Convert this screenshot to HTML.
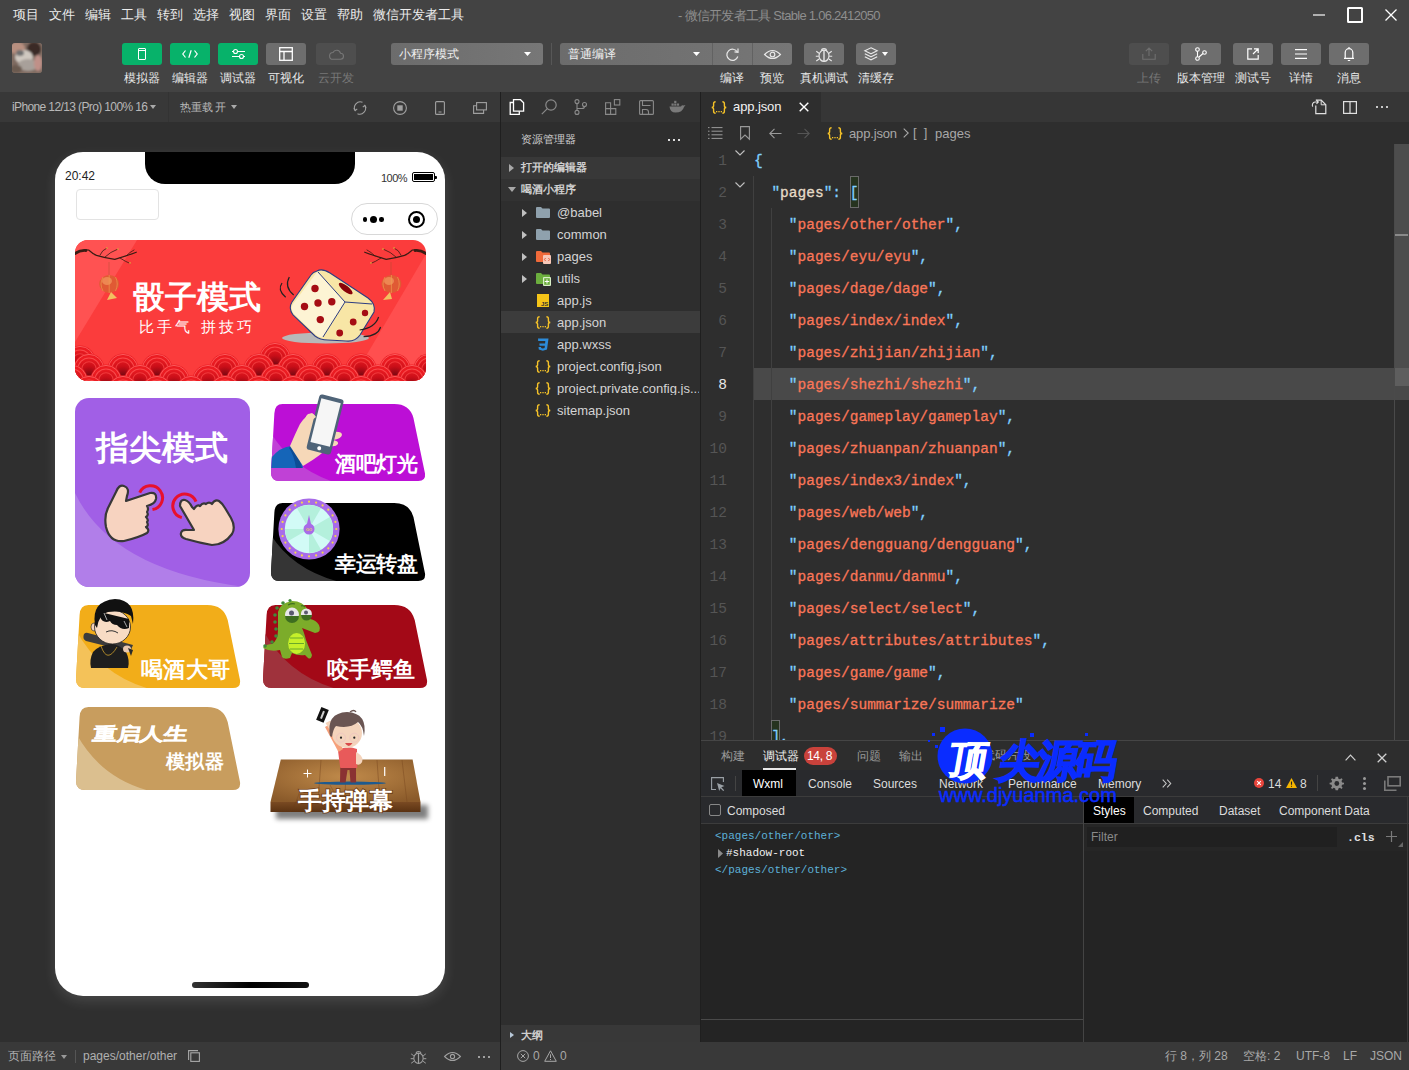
<!DOCTYPE html>
<html><head><meta charset="utf-8">
<style>
*{box-sizing:border-box;margin:0;padding:0}
html,body{width:1409px;height:1070px;overflow:hidden;background:#2e2e2e;font-family:"Liberation Sans",sans-serif;}
.a{position:absolute}
.t{position:absolute;white-space:nowrap;line-height:1}
svg{position:absolute;overflow:visible}
/* title + toolbar */
#top{left:0;top:0;width:1409px;height:92px;background:#434343}
.menu{top:8px;font-size:13px;color:#ececec}
.btn{position:absolute;top:43px;width:40px;height:22px;border-radius:3px}
.g{background:#07b26a}
.gr{background:#6e6e6e}
.lbl{top:72px;font-size:12px;color:#e8e8e8}
/* simulator */
#simhead{left:0;top:92px;width:500px;height:30px;background:#383838}
#simbody{left:0;top:122px;width:500px;height:920px;background:#2f2f2f}
#simfoot{left:0;top:1042px;width:500px;height:28px;background:#393939}
#phone{left:55px;top:152px;width:390px;height:844px;background:#fff;border-radius:28px;box-shadow:0 5px 13px rgba(255,255,255,0.12);overflow:hidden}
/* explorer */
#exp{left:501px;top:92px;width:199px;height:950px;background:#2e2e2e}
#acts{left:501px;top:92px;width:199px;height:30px;background:#333}
.row{position:absolute;left:501px;width:199px;height:22px}
.fn{font-size:13px;color:#d4d4d4}
/* editor */
#tabbar{left:701px;top:92px;width:708px;height:30px;background:#363636}
#tab{left:701px;top:92px;width:120px;height:30px;background:#2e2e2e}
#ed{left:701px;top:122px;width:708px;height:618px;background:#2e2e2e}
.ln{position:absolute;left:701px;width:26px;text-align:right;font-family:"Liberation Mono",monospace;font-size:14.5px;color:#555;line-height:32px;height:32px}
.cl{position:absolute;left:754px;font-family:"Liberation Mono",monospace;font-size:14.5px;line-height:32px;height:32px;white-space:pre;color:#d8d8d8;-webkit-text-stroke:0.3px currentColor}
.p{color:#80d0ff}
.s{color:#fa7658}
.k{color:#e6dcc8}
/* bottom panel */
#panel{left:701px;top:740px;width:708px;height:302px;background:#242424}
#status{left:501px;top:1042px;width:908px;height:28px;background:#393939}
.dt{font-size:13px;color:#dcdcdc}
</style></head><body>
<div class="a" id="top"></div>
<div class="a" id="simhead"></div>
<div class="a" id="simbody"></div>
<div class="a" id="simfoot"></div>
<div class="a" id="exp"></div>
<div class="a" id="acts"></div>
<div class="a" id="tabbar"></div>
<div class="a" id="tab"></div>
<div class="a" id="ed"></div>
<div class="a" id="panel"></div>
<div class="a" id="status"></div>
<!-- dividers -->
<div class="a" style="left:500px;top:92px;width:1px;height:978px;background:#1f1f1f"></div>
<div class="a" style="left:700px;top:92px;width:1px;height:950px;background:#1f1f1f"></div>
<!-- MENU -->
<div class="t menu" style="left:13px">项目</div>
<div class="t menu" style="left:49px">文件</div>
<div class="t menu" style="left:85px">编辑</div>
<div class="t menu" style="left:121px">工具</div>
<div class="t menu" style="left:157px">转到</div>
<div class="t menu" style="left:193px">选择</div>
<div class="t menu" style="left:229px">视图</div>
<div class="t menu" style="left:265px">界面</div>
<div class="t menu" style="left:301px">设置</div>
<div class="t menu" style="left:337px">帮助</div>
<div class="t menu" style="left:373px">微信开发者工具</div>
<div class="t" style="left:678px;top:9px;font-size:13px;color:#8e8e8e;letter-spacing:-0.72px">- 微信开发者工具 Stable 1.06.2412050</div>
<!-- window controls -->
<div class="a" style="left:1313px;top:14px;width:12px;height:2px;background:#b0b0b0"></div>
<div class="a" style="left:1347px;top:7px;width:16px;height:16px;border:2px solid #fff;border-radius:1.5px"></div>
<svg style="left:1385px;top:9px" width="12" height="12"><path d="M0.5 0.5L11.5 11.5M11.5 0.5L0.5 11.5" stroke="#fff" stroke-width="1.3"/></svg>
<!-- avatar -->
<div class="a" style="left:12px;top:43px;width:30px;height:30px;border-radius:3px;overflow:hidden;background:#8a7468">
<svg style="left:0;top:0" width="30" height="30"><defs><filter id="avb"><feGaussianBlur stdDeviation="1.2"/></filter></defs>
<g filter="url(#avb)">
<rect x="0" y="0" width="30" height="30" fill="#7e6a60"/>
<ellipse cx="5" cy="5" rx="8" ry="6" fill="#b89080"/>
<ellipse cx="22" cy="6" rx="7" ry="7" fill="#3a2c28"/>
<ellipse cx="12" cy="14" rx="9" ry="7" fill="#cfc8c0"/>
<ellipse cx="8" cy="10" rx="4" ry="3" fill="#707070"/>
<ellipse cx="16" cy="22" rx="10" ry="6" fill="#a8a09a"/>
<ellipse cx="26" cy="20" rx="4" ry="8" fill="#c09088"/>
<ellipse cx="4" cy="26" rx="6" ry="4" fill="#6a5a50"/>
</g></svg>
</div>
<!-- green buttons -->
<div class="btn g" style="left:122px"></div>
<div class="a" style="left:138px;top:48px;width:8px;height:12px;border:1.3px solid #fff;border-radius:1px"></div>
<div class="a" style="left:139px;top:50px;width:6px;height:1px;background:#fff"></div>
<div class="btn g" style="left:170px"></div>
<svg style="left:182px;top:50px" width="16" height="8"><path d="M3.5 0.5L0.8 4L3.5 7.5M12.5 0.5L15.2 4L12.5 7.5M9.2 0.3L6.8 7.7" stroke="#fff" stroke-width="1.2" fill="none"/></svg>
<div class="btn g" style="left:218px"></div>
<svg style="left:232px;top:49px" width="14" height="10"><path d="M0 2.5H13M0 7.5H13" stroke="#fff" stroke-width="1.1"/><circle cx="3.5" cy="2.5" r="2" fill="#07b26a" stroke="#fff" stroke-width="1.1"/><circle cx="9.5" cy="7.5" r="2" fill="#07b26a" stroke="#fff" stroke-width="1.1"/></svg>
<div class="btn gr" style="left:266px"></div>
<svg style="left:279px;top:47px" width="14" height="14"><rect x="0.7" y="0.7" width="12.6" height="12.6" fill="none" stroke="#fff" stroke-width="1.3"/><path d="M0.7 4.5H13.3M5 4.5V13.3" stroke="#fff" stroke-width="1.3"/></svg>
<div class="btn" style="left:316px;background:#4e4e4e"></div>
<svg style="left:328px;top:49px" width="16" height="11"><path d="M5 10.3H12.5A3 3 0 0 0 12.5 4.3A4 4 0 0 0 5 3.5A3.4 3.4 0 0 0 5 10.3Z" fill="none" stroke="#777" stroke-width="1.1"/></svg>
<div class="t lbl" style="left:124px">模拟器</div>
<div class="t lbl" style="left:172px">编辑器</div>
<div class="t lbl" style="left:220px">调试器</div>
<div class="t lbl" style="left:268px">可视化</div>
<div class="t lbl" style="left:318px;color:#777">云开发</div>
<!-- mode dropdown -->
<div class="a" style="left:391px;top:43px;width:152px;height:22px;border-radius:3px;background:linear-gradient(90deg,#6c6c6c,#777)"></div>
<div class="t" style="left:399px;top:48px;font-size:12px;color:#f0f0f0">小程序模式</div>
<svg style="left:524px;top:52px" width="7" height="4"><path d="M0 0H7L3.5 4Z" fill="#fff"/></svg>
<div class="a" style="left:551px;top:43px;width:1px;height:22px;background:#575757"></div>
<div class="a" style="left:560px;top:43px;width:232px;height:22px;border-radius:3px;background:linear-gradient(90deg,#6c6c6c,#767676)"></div>
<div class="a" style="left:712px;top:43px;width:1px;height:22px;background:#626262"></div>
<div class="a" style="left:752px;top:43px;width:1px;height:22px;background:#626262"></div>
<div class="t" style="left:568px;top:48px;font-size:12px;color:#f0f0f0">普通编译</div>
<svg style="left:693px;top:52px" width="7" height="4"><path d="M0 0H7L3.5 4Z" fill="#fff"/></svg>
<svg style="left:725px;top:47px" width="15" height="15"><path d="M12.3 5A5.6 5.6 0 1 0 12.8 9.5" fill="none" stroke="#e8e8e8" stroke-width="1.2"/><path d="M9.5 4.8L13 5.3L13 1.5" fill="none" stroke="#e8e8e8" stroke-width="1.2"/></svg>
<svg style="left:764px;top:49px" width="17" height="11"><path d="M0.6 5.5Q8.5 -2.5 16.4 5.5Q8.5 13.5 0.6 5.5Z" fill="none" stroke="#e8e8e8" stroke-width="1.2"/><circle cx="8.5" cy="5.5" r="2.3" fill="none" stroke="#e8e8e8" stroke-width="1.2"/></svg>
<div class="btn gr" style="left:804px"></div>
<svg style="left:815px;top:46px" width="18" height="16"><ellipse cx="9" cy="9.8" rx="5" ry="5.6" fill="none" stroke="#e8e8e8" stroke-width="1.2"/><path d="M6.2 4.6A2.9 2.7 0 0 1 11.8 4.6" fill="none" stroke="#e8e8e8" stroke-width="1.2"/><path d="M9 4.3V15.3" stroke="#e8e8e8" stroke-width="1.4"/><path d="M4 7.2L1.3 5.2M3.8 10.3H0.8M4.1 13L1.3 15M14 7.2L16.7 5.2M14.2 10.3H17.2M13.9 13L16.7 15" fill="none" stroke="#e8e8e8" stroke-width="1.1"/></svg>
<div class="btn gr" style="left:856px"></div>
<svg style="left:864px;top:47px" width="14" height="14"><path d="M7 0.8L13.2 3.8L7 6.8L0.8 3.8Z" fill="none" stroke="#e8e8e8" stroke-width="1.1"/><path d="M0.8 6.8L7 9.8L13.2 6.8M0.8 9.8L7 12.8L13.2 9.8" fill="none" stroke="#e8e8e8" stroke-width="1.1"/></svg>
<svg style="left:882px;top:52px" width="6" height="4"><path d="M0 0H6L3 4Z" fill="#fff"/></svg>
<div class="t lbl" style="left:720px">编译</div>
<div class="t lbl" style="left:760px">预览</div>
<div class="t lbl" style="left:800px">真机调试</div>
<div class="t lbl" style="left:858px">清缓存</div>
<!-- right buttons -->
<div class="btn" style="left:1129px;background:#4e4e4e"></div>
<svg style="left:1142px;top:47px" width="14" height="13"><path d="M7 9V1M3.8 4.2L7 1L10.2 4.2M0.8 7V12.3H13.2V7" fill="none" stroke="#6f6f6f" stroke-width="1.1"/></svg>
<div class="btn gr" style="left:1181px"></div>
<svg style="left:1195px;top:47px" width="12" height="14"><circle cx="2.5" cy="2.5" r="1.8" fill="none" stroke="#fff" stroke-width="1.1"/><circle cx="2.5" cy="11.5" r="1.8" fill="none" stroke="#fff" stroke-width="1.1"/><circle cx="9.5" cy="5.5" r="1.8" fill="none" stroke="#fff" stroke-width="1.1"/><path d="M2.5 4.3V9.7M8 6.5L4 10" stroke="#fff" stroke-width="1.1"/></svg>
<div class="btn gr" style="left:1233px"></div>
<svg style="left:1247px;top:48px" width="12" height="12"><path d="M5 0.8H0.8V11.2H11.2V7M6 6L11 1M7 0.8H11.2V5" fill="none" stroke="#fff" stroke-width="1.2"/></svg>
<div class="btn gr" style="left:1281px"></div>
<svg style="left:1295px;top:49px" width="12" height="10"><path d="M0 0.6H12M0 5H12M0 9.4H12" stroke="#fff" stroke-width="1.2"/></svg>
<div class="btn gr" style="left:1329px"></div>
<svg style="left:1343px;top:46px" width="12" height="16"><path d="M1 12.3H11M2.2 12.3V6.5A3.8 3.8 0 0 1 9.8 6.5V12.3M6 1V2.7M4.8 14.5H7.2" fill="none" stroke="#fff" stroke-width="1.2"/></svg>
<div class="t lbl" style="left:1137px;color:#777">上传</div>
<div class="t lbl" style="left:1177px">版本管理</div>
<div class="t lbl" style="left:1235px">测试号</div>
<div class="t lbl" style="left:1289px">详情</div>
<div class="t lbl" style="left:1337px">消息</div>
<!-- SIM HEADER -->
<div class="t" style="left:12px;top:101px;font-size:12px;color:#b8b8b8;letter-spacing:-0.62px">iPhone 12/13 (Pro) 100% 16</div>
<svg style="left:150px;top:105px" width="6" height="4"><path d="M0 0H6L3 4Z" fill="#aaa"/></svg>
<div class="a" style="left:168px;top:92px;width:1px;height:30px;background:#333"></div>
<div class="t" style="left:180px;top:101.5px;font-size:11.2px;color:#b8b8b8;letter-spacing:-0.2px">热重载 开</div>
<svg style="left:230.5px;top:105px" width="6" height="4"><path d="M0 0H6L3 4Z" fill="#aaa"/></svg>
<svg style="left:353px;top:101px" width="14" height="14"><path d="M2.2 9.5A5.8 5.8 0 0 1 9.5 1.3M11.8 4.5A5.8 5.8 0 0 1 4.5 12.7" fill="none" stroke="#a0a0a0" stroke-width="1.1"/><path d="M0.8 7.2L2.2 9.6L4.2 7.8M13.2 6.8L11.8 4.4L9.8 6.2" fill="none" stroke="#a0a0a0" stroke-width="1.1"/></svg>
<svg style="left:393px;top:101px" width="14" height="14"><circle cx="7" cy="7" r="6.4" fill="none" stroke="#a0a0a0" stroke-width="1.1"/><rect x="4.3" y="4.3" width="5.4" height="5.4" fill="#a0a0a0"/></svg>
<svg style="left:435px;top:101px" width="10" height="14"><rect x="0.6" y="0.6" width="8.8" height="12.8" rx="1" fill="none" stroke="#a0a0a0" stroke-width="1.1"/><path d="M3.5 11H6.5" stroke="#a0a0a0" stroke-width="1"/></svg>
<svg style="left:473px;top:102px" width="14" height="12"><rect x="3.6" y="0.6" width="9.8" height="7.3" fill="none" stroke="#a0a0a0" stroke-width="1.1"/><path d="M3.6 3.8H0.6V11.4H10.6V7.9" fill="none" stroke="#a0a0a0" stroke-width="1.1"/></svg>
<!-- SIM FOOTER -->
<div class="t" style="left:8px;top:1050px;font-size:12px;color:#b0b0b0">页面路径</div>
<svg style="left:61px;top:1055px" width="6" height="4"><path d="M0 0H6L3 4Z" fill="#999"/></svg>
<div class="a" style="left:75px;top:1050px;width:1px;height:13px;background:#555"></div>
<div class="t" style="left:83px;top:1050px;font-size:12px;color:#b0b0b0">pages/other/other</div>
<svg style="left:188px;top:1050px" width="12" height="12"><path d="M0.6 10V0.6H10" fill="none" stroke="#a8a8a8" stroke-width="1.1"/><rect x="2.8" y="2.8" width="8.6" height="8.6" fill="none" stroke="#a8a8a8" stroke-width="1.1"/></svg>
<svg style="left:410px;top:1049px" width="17" height="15"><ellipse cx="8.5" cy="9.3" rx="4.7" ry="5.2" fill="none" stroke="#a0a0a0" stroke-width="1.1"/><path d="M5.9 4.3A2.7 2.5 0 0 1 11.1 4.3" fill="none" stroke="#a0a0a0" stroke-width="1.1"/><path d="M8.5 4V14.5" stroke="#a0a0a0" stroke-width="1.2"/><path d="M3.8 6.8L1.2 4.9M3.6 9.7H0.7M3.9 12.3L1.2 14.2M13.2 6.8L15.8 4.9M13.4 9.7H16.3M13.1 12.3L15.8 14.2" fill="none" stroke="#a0a0a0" stroke-width="1"/></svg>
<svg style="left:444px;top:1051px" width="17" height="11"><path d="M0.6 5.5Q8.5 -2.5 16.4 5.5Q8.5 13.5 0.6 5.5Z" fill="none" stroke="#a0a0a0" stroke-width="1.1"/><circle cx="8.5" cy="5.5" r="2.1" fill="none" stroke="#a0a0a0" stroke-width="1.1"/></svg>
<div class="a" style="left:478px;top:1056px;width:2px;height:2px;background:#a0a0a0;box-shadow:5px 0 0 #a0a0a0,10px 0 0 #a0a0a0"></div>
<!-- PHONE -->
<div class="a" id="phone">
 <div class="a" style="left:90px;top:0;width:210px;height:32px;background:#000;border-radius:0 0 20px 20px"></div>
 <div class="t" style="left:10px;top:18px;font-size:12px;color:#222">20:42</div>
 <div class="t" style="left:326px;top:21px;font-size:11px;color:#333;letter-spacing:-0.5px">100%</div>
 <div class="a" style="left:357px;top:20px;width:23px;height:10px;border:1.3px solid #000;border-radius:2px;padding:1.3px"><div style="width:100%;height:100%;background:#000"></div></div>
 <div class="a" style="left:380px;top:23.5px;width:2px;height:3.5px;background:#000;border-radius:0 1px 1px 0"></div>
 <div class="a" style="left:21px;top:37px;width:83px;height:31px;border:1px solid #e3e3e3;border-radius:4px"></div>
 <div class="a" style="left:296px;top:51px;width:87px;height:32px;border:1px solid #d8d8d8;border-radius:16px"></div>
 <div class="a" style="left:307.5px;top:65px;width:4.5px;height:4.5px;border-radius:50%;background:#000"></div>
 <div class="a" style="left:314.5px;top:63.5px;width:7px;height:7px;border-radius:50%;background:#000"></div>
 <div class="a" style="left:324px;top:65px;width:4.5px;height:4.5px;border-radius:50%;background:#000"></div>
 <div class="a" style="left:353px;top:59px;width:17px;height:17px;border-radius:50%;border:2px solid #000"></div>
 <div class="a" style="left:358px;top:64px;width:7px;height:7px;border-radius:50%;background:#000"></div>
 <div class="a" style="left:137px;top:830px;width:117px;height:6px;border-radius:3px;background:linear-gradient(90deg,#333,#000 50%,#111)"></div>
 <svg style="left:0;top:0" width="390" height="844" viewBox="55 152 390 844">
<defs>
 <clipPath id="cb"><rect x="75" y="240" width="351" height="141" rx="13"/></clipPath>
 <clipPath id="cp"><rect x="75" y="398" width="175" height="189" rx="14"/></clipPath>
 <path id="tag" d="M12 0H128Q144 0 148 15L160 75Q161 83 153 83H9Q0 83 0 74L3.5 10Q4 0 12 0Z"/>
 <clipPath id="ct1"><use href="#tag" transform="translate(271,404) scale(0.9625,0.928)"/></clipPath>
 <clipPath id="ct2"><use href="#tag" transform="translate(271,503) scale(0.9625,0.94)"/></clipPath>
 <clipPath id="ct3"><use href="#tag" transform="translate(76,605) scale(1.025,1.0)"/></clipPath>
 <clipPath id="ct4"><use href="#tag" transform="translate(263,605) scale(1.025,1.0)"/></clipPath>
 <clipPath id="ct5"><use href="#tag" transform="translate(76,707) scale(1.025,1.0)"/></clipPath>
 <radialGradient id="scg" cx="0.5" cy="0.75" r="0.6"><stop offset="0" stop-color="#6e0610"/><stop offset="0.55" stop-color="#c80e18"/><stop offset="1" stop-color="#ec1c22"/></radialGradient><g id="sc"><circle r="15.5" fill="url(#scg)"/><circle r="14.6" fill="none" stroke="#ff7070" stroke-width="0.9" opacity=".8"/><circle r="11" fill="none" stroke="#ff5a5a" stroke-width="1.1" opacity=".75"/><circle r="7.2" fill="none" stroke="#ff5050" stroke-width="1.1" opacity=".6"/></g>
 <radialGradient id="wood" cx="0.5" cy="0.4" r="0.7"><stop offset="0" stop-color="#c08a4a"/><stop offset="1" stop-color="#8a5a2a"/></radialGradient>
</defs>
<!-- BANNER -->
<g clip-path="url(#cb)">
 <rect x="75" y="240" width="351" height="141" fill="#fb3c3c"/>
 <path d="M75 240H137L75 342Z" fill="#ff5252"/>
 <path d="M426 254L366 356V381H426Z" fill="#ff4f4f"/>
 <g>
  <use href="#sc" x="80" y="361"/><use href="#sc" x="275" y="358"/><use href="#sc" x="89" y="369"/><use href="#sc" x="123" y="369"/><use href="#sc" x="157" y="369"/><use href="#sc" x="225" y="369"/><use href="#sc" x="259" y="369"/><use href="#sc" x="293" y="369"/><use href="#sc" x="327" y="369"/><use href="#sc" x="361" y="369"/><use href="#sc" x="395" y="369"/><use href="#sc" x="429" y="369"/><use href="#sc" x="72" y="380"/><use href="#sc" x="106" y="380"/><use href="#sc" x="140" y="380"/><use href="#sc" x="174" y="380"/><use href="#sc" x="208" y="380"/><use href="#sc" x="242" y="380"/><use href="#sc" x="276" y="380"/><use href="#sc" x="310" y="380"/><use href="#sc" x="344" y="380"/><use href="#sc" x="378" y="380"/><use href="#sc" x="412" y="380"/><use href="#sc" x="89" y="391"/><use href="#sc" x="123" y="391"/><use href="#sc" x="157" y="391"/><use href="#sc" x="191" y="391"/><use href="#sc" x="225" y="391"/><use href="#sc" x="259" y="391"/><use href="#sc" x="293" y="391"/><use href="#sc" x="327" y="391"/><use href="#sc" x="361" y="391"/><use href="#sc" x="395" y="391"/><use href="#sc" x="429" y="391"/></g>
 <!-- branches -->
 <g fill="none" stroke="#3a1c14" stroke-linecap="round">
  <path d="M75 253.5Q82 249 88.6 250Q93 254 96.5 255.4Q105 258 114.8 259.4Q126 256 136.3 252.2" stroke-width="1.2"/>
  <path d="M75 253.5Q80 250 86 250.5" stroke-width="2.8"/>
  <path d="M105 257Q110 252 118 249M120 258Q126 262 130 263.4M100 255Q102 250 107 248M126 256Q130 252 134 250" stroke-width="0.8"/>
  <path d="M426 253.5Q419 249 412.4 250Q408 254 404.5 255.4Q396 258 386.2 259.4Q375 256 364.7 252.2" stroke-width="1.2"/>
  <path d="M426 253.5Q421 250 415 250.5" stroke-width="2.8"/>
  <path d="M396 257Q391 252 383 249M381 258Q375 262 371 263.4M401 255Q399 250 394 248M375 256Q371 252 367 250" stroke-width="0.8"/>
 </g>
 <g fill="#f0a040" opacity=".9"><circle cx="118" cy="249" r="0.9"/><circle cx="130" cy="263" r="0.9"/><circle cx="107" cy="248" r="0.9"/><circle cx="383" cy="249" r="0.9"/><circle cx="371" cy="263" r="0.9"/><circle cx="394" cy="248" r="0.9"/></g>
 <path d="M109 262V275M391 262V275" stroke="#a05030" stroke-width="0.4"/>
 <ellipse cx="109.2" cy="284" rx="10" ry="9" fill="#e05a34"/><ellipse cx="107" cy="281" rx="5" ry="4" fill="#f29a60" opacity=".7"/><path d="M103 277Q99 284 103 291M109.2 275V293M115.5 277Q119 284 115.5 291" fill="none" stroke="#f0a050" stroke-width="0.8" opacity=".8"/><path d="M111 292L107 300L117 298Z" fill="#f2c060"/>
 <ellipse cx="391.4" cy="284" rx="10" ry="9" fill="#e05a34"/><ellipse cx="389" cy="281" rx="5" ry="4" fill="#f29a60" opacity=".7"/><path d="M385 277Q381 284 385 291M391.4 275V293M397.5 277Q401 284 397.5 291" fill="none" stroke="#f0a050" stroke-width="0.8" opacity=".8"/><path d="M390 292L383 300L392 299Z" fill="#f2c060"/>
 <!-- dice shadow -->
 <ellipse cx="325.5" cy="338" rx="43.5" ry="5.5" fill="#b8b8b8"/>
 <path d="M317 271Q322 268 330 273L368 298Q376 304 374 312L360 335Q355 342 346 341L328 340Q320 340 315 336L293 315Q288 308 292 302L311 275Q313 272 317 271Z" fill="#f8e6a6" stroke="#2c3c82" stroke-width="1.1"/>
 <path d="M317 272L293 304Q290 309 294 314L316 335Q320 338 323 337L345 302L319 273Z" fill="#fdf4d4"/>
 <path d="M318 272L345 302L372 304" fill="none" stroke="#2c3c82" stroke-width="1"/>
 <path d="M345 302L323 337" fill="none" stroke="#2c3c82" stroke-width="1"/>
 <g fill="#a50d14">
  <circle cx="315" cy="288.5" r="3.7"/><circle cx="304.5" cy="306.5" r="3.7"/><circle cx="318" cy="303" r="3.7"/><circle cx="331.8" cy="301.7" r="3.7"/><circle cx="320.3" cy="319.6" r="3.7"/>
  <circle cx="365" cy="313" r="3.2"/><circle cx="353.2" cy="322" r="3.4"/><circle cx="339.7" cy="333" r="3.4"/>
  <ellipse cx="345.7" cy="288.6" rx="8.5" ry="3" transform="rotate(38 345.7 288.6)" fill="#8a0408"/>
 </g>
 <path d="M289.3 277Q284 287 293.7 295M282 283Q277 290 285.7 297.3" fill="none" stroke="#222" stroke-width="1.2"/>
 <path d="M378.6 317Q375 328 359.6 330M380.6 327Q378 336 363.6 336.6" fill="none" stroke="#222" stroke-width="1.2"/>
</g>
<text x="133" y="308" font-family="Liberation Sans" font-size="32" font-weight="bold" fill="#fff" letter-spacing="0">骰子模式</text>
<text x="139" y="332" font-family="Liberation Sans" font-size="15" fill="#fff" letter-spacing="3.2">比手气 拼技巧</text>
<!-- PURPLE -->
<g clip-path="url(#cp)">
 <rect x="75" y="398" width="175" height="189" fill="#a15fe6"/>
 <path d="M75 493Q112 570 245 587H75Z" fill="#b17ee9"/>
</g>
<text x="96" y="459" font-family="Liberation Sans" font-size="32.5" font-weight="bold" fill="#fff" letter-spacing="0">指尖模式</text>
<!-- hands -->
<path d="M139.7 492.6A12 12 0 1 1 152.5 509.6" fill="none" stroke="#e8102c" stroke-width="3"/>
<path d="M196 501.6A12 12 0 1 0 181.8 517.6" fill="none" stroke="#e8102c" stroke-width="3"/>
<path d="M116 492Q119 484 124 486Q130 488 127 496L126 501L150 493Q157 492 156 499Q155 504 147 506Q149 509 147 512Q149 515 146 517Q149 520 147 522Q149 526 146 527Q150 530 147 533Q140 537 124 541Q110 543 106 527Q104 516 108 508Z" fill="#f7d3c0" stroke="#383838" stroke-width="2.2" stroke-linejoin="round"/>
<path d="M180 506Q180 499 185 500Q189 501 192 507L194 509Q197 504 200 506Q203 502 206 504Q209 501 212 504Q215 499 219 501Q222 503 225 508L231 518Q236 527 232 534Q224 545 212 545Q200 543 186 539Q180 537 181 533Q182 529 188 530L194 530Z" fill="#f7d3c0" stroke="#383838" stroke-width="2.2" stroke-linejoin="round"/>
<!-- MAGENTA TAG -->
<g clip-path="url(#ct1)">
 <rect x="270" y="400" width="160" height="85" fill="#bc0fd6"/>
 <path d="M271 433Q293 470 340 484H270Z" fill="#c041d6"/>
 <path d="M271 458Q280 447 291 446Q300 449 303 468H271Z" fill="#1565b8"/>
 <path d="M291 446Q298 450 302 468L296 468Q294 455 289 448Z" fill="#0d4d96"/>
 <path d="M290 446Q296 432 300 424Q305 416 312 413L318 418L333 443Q322 455 303 466Z" fill="#f6d8b8"/>
 <path d="M333 432Q342 431 342 435Q341 439 333 440M333 440Q339 441 338 444Q336 447 330 446" fill="#f6d8b8"/>
</g>
<g transform="translate(325,425) rotate(14)">
 <rect x="-12.5" y="-29" width="25" height="57" rx="3" fill="#4f6478"/>
 <rect x="-10" y="-25" width="20" height="45" fill="#f6f6f6"/>
 <circle cx="0" cy="24" r="2" fill="#fff"/>
</g>
<path d="M308 423Q303 418 308 414Q313 412 316 417" fill="#f6d8b8"/>
<text x="335" y="470.5" font-family="Liberation Sans" font-size="21" font-weight="bold" fill="#fff" letter-spacing="-0.3">酒吧灯光</text>
<!-- BLACK TAG -->
<g clip-path="url(#ct2)">
 <rect x="270" y="500" width="160" height="85" fill="#000"/>
 <path d="M271 535Q293 570 340 582H270Z" fill="#353535"/>
</g>
<circle cx="309" cy="529" r="30.6" fill="#a86ce8"/>
<circle cx="309" cy="529" r="24.2" fill="#d2fbf6"/>
<g fill="#b4f0dc">
 <path d="M309 529L309 505A24 24 0 0 1 321 508.2Z"/><path d="M309 529L329.8 517A24 24 0 0 1 333 529Z"/><path d="M309 529L321 549.8A24 24 0 0 1 309 553Z"/><path d="M309 529L288.2 541A24 24 0 0 1 285 529Z"/><path d="M309 529L297 508.2A24 24 0 0 1 309 505Z"/><path d="M309 529L333 529A24 24 0 0 1 329.8 541Z"/>
</g>
<g fill="#f5d84a"><circle cx="336.3" cy="529.0" r="1.1"/><circle cx="335.4" cy="536.1" r="1.1"/><circle cx="332.6" cy="542.6" r="1.1"/><circle cx="328.3" cy="548.3" r="1.1"/><circle cx="322.6" cy="552.6" r="1.1"/><circle cx="316.1" cy="555.4" r="1.1"/><circle cx="309.0" cy="556.3" r="1.1"/><circle cx="301.9" cy="555.4" r="1.1"/><circle cx="295.4" cy="552.6" r="1.1"/><circle cx="289.7" cy="548.3" r="1.1"/><circle cx="285.4" cy="542.6" r="1.1"/><circle cx="282.6" cy="536.1" r="1.1"/><circle cx="281.7" cy="529.0" r="1.1"/><circle cx="282.6" cy="521.9" r="1.1"/><circle cx="285.4" cy="515.4" r="1.1"/><circle cx="289.7" cy="509.7" r="1.1"/><circle cx="295.3" cy="505.4" r="1.1"/><circle cx="301.9" cy="502.6" r="1.1"/><circle cx="309.0" cy="501.7" r="1.1"/><circle cx="316.1" cy="502.6" r="1.1"/><circle cx="322.6" cy="505.4" r="1.1"/><circle cx="328.3" cy="509.7" r="1.1"/><circle cx="332.6" cy="515.4" r="1.1"/><circle cx="335.4" cy="521.9" r="1.1"/></g>
<path d="M309 515L311.5 526H306.5Z" fill="#a86ce8"/><circle cx="309" cy="529" r="5.5" fill="#a86ce8"/><text x="309" y="531" font-family="Liberation Sans" font-size="4" font-weight="bold" fill="#e8c860" text-anchor="middle">GO</text>
<text x="335" y="571" font-family="Liberation Sans" font-size="21" font-weight="bold" fill="#fff" letter-spacing="-0.3">幸运转盘</text>
<!-- YELLOW TAG -->
<g clip-path="url(#ct3)">
 <rect x="74" y="600" width="172" height="92" fill="#f2ad19"/>
 <path d="M76 630Q100 675 150 689H74Z" fill="#f4c259"/>
</g>
<path d="M84 634Q82 639 86 641L130 652L133 645L88 633Q86 632 84 634Z" fill="#3c3c3c"/>
<path d="M93 652Q89 660 91 668H128Q130 660 126 652Q119 644 111 644Q99 645 93 652Z" fill="#1e1e1e"/>
<path d="M101 646Q107 664 117 647" fill="none" stroke="#b8902a" stroke-width="0.9"/>
<ellipse cx="127" cy="649" rx="4" ry="3.5" fill="#e8c8b0"/>
<path d="M128 648L133 650L131 656Z" fill="#2a2a2a"/>
<ellipse cx="94" cy="627" rx="3" ry="4" fill="#f3d2b8" stroke="#222" stroke-width=".6"/>
<ellipse cx="112.5" cy="627" rx="18" ry="17" fill="#f8dcc4" stroke="#222" stroke-width="0.8"/>
<path d="M95 625Q91 601 115 599Q136 600 133 624L131 616Q122 610 108 612Q99 614 97 628Z" fill="#111"/>
<path d="M100 612L129 619L129 628Q122 631 117 625Q112 625 110 621Q103 624 100 617Z" fill="#111"/>
<path d="M104 613L107 620M124 621L127 627" stroke="#bbb" stroke-width="0.9"/>
<path d="M106 632Q112 629 118 633" fill="none" stroke="#333" stroke-width="1"/>
<text x="141" y="676.5" font-family="Liberation Sans" font-size="22" font-weight="bold" fill="#fff" letter-spacing="0.4">喝酒大哥</text>
<!-- RED TAG -->
<g clip-path="url(#ct4)">
 <rect x="260" y="600" width="172" height="92" fill="#a30917"/>
 <path d="M263 630Q287 675 337 689H260Z" fill="#9f323c"/>
</g>
<path d="M263 648Q270 652 280 650L282 657Q284 660 290 658L292 653Q298 656 305 655L308 658Q311 660 312 655L306 640Q304 632 302 628L315 633Q322 632 319 625Q316 620 310 619L308 610Q303 601 292 601Q280 603 278 612L278 630Q278 640 272 644Q266 644 263 648Z" fill="#7cac2a"/>
<g fill="#3f8a3a"><circle cx="277" cy="608" r="1.8"/><circle cx="275" cy="615" r="1.8"/><circle cx="275" cy="622" r="1.8"/><circle cx="276" cy="629" r="1.8"/><circle cx="276" cy="636" r="1.8"/><circle cx="272" cy="642" r="1.8"/><circle cx="265" cy="646" r="1.8"/><circle cx="283" cy="603" r="1.8"/><circle cx="290" cy="600.5" r="1.6"/></g>
<ellipse cx="296.6" cy="643.4" rx="8.5" ry="10.5" fill="#c5f02a"/>
<path d="M290 638H303M289 643.5H304M290 649H303" stroke="#6aa82a" stroke-width="1"/>
<circle cx="292" cy="614.6" r="7" fill="#e8e8e8"/><circle cx="306.4" cy="614" r="5.5" fill="#e8e8e8"/>
<circle cx="291.5" cy="613" r="2.5" fill="#5a5a70"/><circle cx="306" cy="612.5" r="2" fill="#5a5a70"/>
<path d="M285 616H299A7 7 0 0 1 285 616Z" fill="#3e6e20"/><path d="M301 615H312A5.5 5.5 0 0 1 301 615Z" fill="#3e6e20"/>
<path d="M288 605Q292 603 295 604M301 606Q303 605 305 607" stroke="#3e6e20" stroke-width="1.2" fill="none"/>
<text x="327" y="677" font-family="Liberation Sans" font-size="22" font-weight="bold" fill="#fff" letter-spacing="0">咬手鳄鱼</text>
<!-- TAN TAG -->
<g clip-path="url(#ct5)">
 <rect x="74" y="700" width="172" height="92" fill="#c89d5e"/>
 <path d="M76 733Q100 778 150 791H74Z" fill="#dbbf8f"/>
</g>
<text x="92" y="740" font-family="Liberation Sans" font-size="24" font-weight="bold" fill="#fff" stroke="#fff" stroke-width="0.6" transform="translate(92,740) skewX(-10) scale(1,0.74) translate(-92,-740)" letter-spacing="0">重启人生</text>
<text x="166" y="767.5" font-family="Liberation Sans" font-size="18.5" font-weight="bold" fill="#fff" letter-spacing="0.3">模拟器</text>
<!-- WOOD -->
<defs><filter id="bl" x="-10%" y="-50%" width="120%" height="200%"><feGaussianBlur stdDeviation="2.5"/></filter>
<linearGradient id="frt" x1="0" y1="0" x2="0" y2="1"><stop offset="0" stop-color="#7a4a22"/><stop offset="1" stop-color="#5a3212"/></linearGradient></defs>
<rect x="276" y="805" width="152" height="14" fill="#000" opacity=".5" filter="url(#bl)"/>
<path d="M280.8 759.5H412.6L420.5 802H270.5Z" fill="url(#wood)"/>
<rect x="270.5" y="802" width="150" height="10" fill="url(#frt)"/>
<path d="M321 760L318 802M346 760L345 802M377 760L380 802M402 760L407 802" stroke="#7a4a20" stroke-width="0.9" opacity=".55"/>
<path d="M330 785Q340 800 336 812M300 790Q296 805 290 812" stroke="#6a3a18" stroke-width="0.6" fill="none" opacity=".5"/>
<ellipse cx="350" cy="783.2" rx="35.8" ry="1.6" fill="#1e5a8e"/>
<path d="M307.5 769.5V777.5M303.5 773.5H311.5" stroke="#fff" stroke-width="1"/>
<path d="M384.7 767V776" stroke="#fff" stroke-width="1.2"/>
<!-- person -->
<path d="M340.3 767L340 782.6H345.5L347.5 770L349.5 770L350.5 782.6H356.1L356 767Z" fill="#8a3232"/>
<path d="M337.9 750Q347 745 357 749L357.3 768H340.3Z" fill="#e85a5a"/>
<path d="M338.5 752L325 727L331 723.5L343 749Z" fill="#f6a07a"/>
<path d="M331 732L325.5 723L330.5 720.5L335 729Z" fill="#f4d4bc"/>
<path d="M356 752Q364 756 362 762Q360 766 356 764" fill="#f4d4bc"/>
<circle cx="347" cy="733" r="15" fill="#f4d4bc"/>
<path d="M330 736Q326 713 347 712Q368 713 364 736Q363 726 358 722Q350 729 336 726Q333 729 332 737Z" fill="#6a5552"/>
<path d="M350 712Q354 709 356 712" stroke="#6a5552" stroke-width="1.3" fill="none"/>
<circle cx="341" cy="737.7" r="4.5" fill="none" stroke="#f0c8c0" stroke-width="1"/><circle cx="354.3" cy="737.7" r="4.5" fill="none" stroke="#f0c8c0" stroke-width="1"/>
<circle cx="341" cy="737.7" r="1.1" fill="#222"/><circle cx="354.3" cy="737.7" r="1.1" fill="#222"/>
<path d="M345 743Q348.8 749 352.5 743Z" fill="#d84a4a"/>
<g transform="translate(322.1,715.8) rotate(22)"><rect x="-5.5" y="-9.5" width="11" height="19" rx="1.5" fill="#fff"/><rect x="-4" y="-8" width="8" height="14" fill="#111"/><rect x="-1" y="-5" width="2" height="8" fill="#fff" opacity=".8"/></g>
<text x="298" y="808.5" font-family="Liberation Sans" font-size="24" font-weight="bold" fill="#fff" stroke="#6a3a16" stroke-width="1.6" paint-order="stroke" letter-spacing="-0.5">手持弹幕</text>
</svg>

</div>
<!-- EXPLORER -->
<svg style="left:509px;top:99px" width="16" height="16"><path d="M4.5 3.5H1.2V15.3H10.3V12.2" fill="none" stroke="#fff" stroke-width="1.3"/><path d="M4.5 0.7H11.5L14.6 3.8V12.2H4.5Z" fill="none" stroke="#fff" stroke-width="1.3"/></svg>
<svg style="left:541px;top:99px" width="16" height="16"><circle cx="10" cy="6" r="5.2" fill="none" stroke="#8a8a8a" stroke-width="1.2"/><path d="M6.3 9.7L0.8 15.2" stroke="#8a8a8a" stroke-width="1.2"/></svg>
<svg style="left:574px;top:99px" width="14" height="16"><circle cx="3" cy="2.6" r="2" fill="none" stroke="#8a8a8a" stroke-width="1.1"/><circle cx="3" cy="13.4" r="2" fill="none" stroke="#8a8a8a" stroke-width="1.1"/><circle cx="10.5" cy="5.5" r="2" fill="none" stroke="#8a8a8a" stroke-width="1.1"/><path d="M3 4.6V11.4M10.5 7.5Q10.5 9.5 8 9.5H3" fill="none" stroke="#8a8a8a" stroke-width="1.1"/></svg>
<svg style="left:605px;top:99px" width="16" height="16"><path d="M0.6 3.8H5.6V15.4H0.6ZM0.6 9.6H10.8V15.4H5.6" fill="none" stroke="#8a8a8a" stroke-width="1.1"/><rect x="9.4" y="0.6" width="5.4" height="5.4" fill="none" stroke="#8a8a8a" stroke-width="1.1"/></svg>
<svg style="left:639px;top:100px" width="15" height="15"><rect x="0.6" y="0.6" width="13.8" height="13.8" rx="1" fill="none" stroke="#8a8a8a" stroke-width="1.1"/><path d="M3.5 0.6V5.5H11.5M3.5 14.4V9.5H7Q9.5 9.5 9.5 12V14.4" fill="none" stroke="#8a8a8a" stroke-width="1.1"/></svg>
<svg style="left:669px;top:100px" width="17" height="13"><path d="M0.5 6.5H12Q13 4.5 14.5 5.5L16.5 5L15 7Q13.5 12.5 6.5 12.5Q1 12.5 0.5 6.5Z" fill="#7a7a7a"/><rect x="2.5" y="3.5" width="2.2" height="2.2" fill="#7a7a7a"/><rect x="5.2" y="3.5" width="2.2" height="2.2" fill="#7a7a7a"/><rect x="7.9" y="3.5" width="2.2" height="2.2" fill="#7a7a7a"/><rect x="5.2" y="0.8" width="2.2" height="2.2" fill="#7a7a7a"/></svg>
<div class="t" style="left:521px;top:134px;font-size:11px;color:#cfcfcf">资源管理器</div>
<div class="a" style="left:668px;top:138.5px;width:2px;height:2px;background:#ddd;box-shadow:5px 0 0 #ddd,10px 0 0 #ddd"></div>
<div class="row" style="top:157px;background:#383838"></div>
<div class="row" style="top:179px;background:#323232"></div>
<svg style="left:509px;top:164px" width="5" height="8"><path d="M0 0L5 4L0 8Z" fill="#a8a8a8"/></svg>
<div class="t" style="left:521px;top:162px;font-size:11px;font-weight:bold;color:#cfcfcf">打开的编辑器</div>
<svg style="left:508px;top:187px" width="8" height="5"><path d="M0 0H8L4 5Z" fill="#a8a8a8"/></svg>
<div class="t" style="left:521px;top:184px;font-size:11px;font-weight:bold;color:#cfcfcf">喝酒小程序</div>
<div class="row" style="top:311px;background:#3c3c3c"></div>
<!-- folders -->
<svg style="left:522px;top:209px" width="5" height="8"><path d="M0 0L5 4L0 8Z" fill="#c0c0c0"/></svg>
<svg style="left:522px;top:231px" width="5" height="8"><path d="M0 0L5 4L0 8Z" fill="#c0c0c0"/></svg>
<svg style="left:522px;top:253px" width="5" height="8"><path d="M0 0L5 4L0 8Z" fill="#c0c0c0"/></svg>
<svg style="left:522px;top:275px" width="5" height="8"><path d="M0 0L5 4L0 8Z" fill="#c0c0c0"/></svg>
<svg style="left:536px;top:207px" width="14" height="11"><path d="M0 1Q0 0 1 0H5L6.5 1.5H13Q14 1.5 14 2.5V10Q14 11 13 11H1Q0 11 0 10Z" fill="#8fa1ad"/></svg>
<svg style="left:536px;top:229px" width="14" height="11"><path d="M0 1Q0 0 1 0H5L6.5 1.5H13Q14 1.5 14 2.5V10Q14 11 13 11H1Q0 11 0 10Z" fill="#8fa1ad"/></svg>
<svg style="left:536px;top:251px" width="15" height="13"><path d="M0 1Q0 0 1 0H5L6.5 1.5H13Q14 1.5 14 2.5V10Q14 11 13 11H1Q0 11 0 10Z" fill="#f06a3a"/><rect x="7" y="4" width="8" height="9" rx="1" fill="#f8c8b8"/><path d="M9.6 7L8.4 8.5L9.6 10M12.4 7L13.6 8.5L12.4 10" stroke="#e05030" stroke-width="0.9" fill="none"/></svg>
<svg style="left:536px;top:273px" width="15" height="13"><path d="M0 1Q0 0 1 0H5L6.5 1.5H13Q14 1.5 14 2.5V10Q14 11 13 11H1Q0 11 0 10Z" fill="#6cae3e"/><rect x="7" y="4" width="8" height="9" rx="1" fill="#d8efc8"/><rect x="8.2" y="5.2" width="5.6" height="6.6" fill="#6cae3e"/><path d="M11 6.3V10.7M8.8 8.5H13.2" stroke="#fff" stroke-width="1"/></svg>
<div class="t fn" style="left:557px;top:206px">@babel</div>
<div class="t fn" style="left:557px;top:228px">common</div>
<div class="t fn" style="left:557px;top:250px">pages</div>
<div class="t fn" style="left:557px;top:272px">utils</div>
<!-- files -->
<div class="a" style="left:537px;top:294px;width:12px;height:13px;background:#f5c518"></div>
<div class="t" style="left:541px;top:301px;font-size:6px;font-weight:bold;color:#333">JS</div>
<div class="t fn" style="left:557px;top:294px">app.js</div>
<svg style="left:535px;top:316px" width="16" height="13"><path d="M4.6 0.8Q2.6 0.8 2.6 2.8V4.8Q2.6 6.5 0.7 6.5Q2.6 6.5 2.6 8.2V10.2Q2.6 12.2 4.6 12.2M11.4 0.8Q13.4 0.8 13.4 2.8V4.8Q13.4 6.5 15.3 6.5Q13.4 6.5 13.4 8.2V10.2Q13.4 12.2 11.4 12.2" fill="none" stroke="#f5c228" stroke-width="1.4"/><rect x="5" y="10" width="1.3" height="1.3" fill="#f5c228"/><rect x="7.35" y="10" width="1.3" height="1.3" fill="#f5c228"/><rect x="9.7" y="10" width="1.3" height="1.3" fill="#f5c228"/></svg>
<div class="t fn" style="left:557px;top:316px">app.json</div>
<svg style="left:537px;top:338px" width="12" height="13"><path d="M1 0.5H11.5L10 11.5L5.8 12.8L1.8 11.5L1.5 9H4L4.2 10L5.8 10.5L7.6 10L7.9 7.7H2.6L2.3 5.5H8.1L8.3 3H1.2Z" fill="#2c8bd9"/></svg>
<div class="t fn" style="left:557px;top:338px">app.wxss</div>
<svg style="left:535px;top:360px" width="16" height="13"><path d="M4.6 0.8Q2.6 0.8 2.6 2.8V4.8Q2.6 6.5 0.7 6.5Q2.6 6.5 2.6 8.2V10.2Q2.6 12.2 4.6 12.2M11.4 0.8Q13.4 0.8 13.4 2.8V4.8Q13.4 6.5 15.3 6.5Q13.4 6.5 13.4 8.2V10.2Q13.4 12.2 11.4 12.2" fill="none" stroke="#f5c228" stroke-width="1.4"/><rect x="5" y="10" width="1.3" height="1.3" fill="#f5c228"/><rect x="7.35" y="10" width="1.3" height="1.3" fill="#f5c228"/><rect x="9.7" y="10" width="1.3" height="1.3" fill="#f5c228"/></svg>
<div class="t fn" style="left:557px;top:360px">project.config.json</div>
<svg style="left:535px;top:382px" width="16" height="13"><path d="M4.6 0.8Q2.6 0.8 2.6 2.8V4.8Q2.6 6.5 0.7 6.5Q2.6 6.5 2.6 8.2V10.2Q2.6 12.2 4.6 12.2M11.4 0.8Q13.4 0.8 13.4 2.8V4.8Q13.4 6.5 15.3 6.5Q13.4 6.5 13.4 8.2V10.2Q13.4 12.2 11.4 12.2" fill="none" stroke="#f5c228" stroke-width="1.4"/><rect x="5" y="10" width="1.3" height="1.3" fill="#f5c228"/><rect x="7.35" y="10" width="1.3" height="1.3" fill="#f5c228"/><rect x="9.7" y="10" width="1.3" height="1.3" fill="#f5c228"/></svg>
<div class="t fn" style="left:557px;top:382px;width:142px;overflow:hidden">project.private.config.js...</div>
<svg style="left:535px;top:404px" width="16" height="13"><path d="M4.6 0.8Q2.6 0.8 2.6 2.8V4.8Q2.6 6.5 0.7 6.5Q2.6 6.5 2.6 8.2V10.2Q2.6 12.2 4.6 12.2M11.4 0.8Q13.4 0.8 13.4 2.8V4.8Q13.4 6.5 15.3 6.5Q13.4 6.5 13.4 8.2V10.2Q13.4 12.2 11.4 12.2" fill="none" stroke="#f5c228" stroke-width="1.4"/><rect x="5" y="10" width="1.3" height="1.3" fill="#f5c228"/><rect x="7.35" y="10" width="1.3" height="1.3" fill="#f5c228"/><rect x="9.7" y="10" width="1.3" height="1.3" fill="#f5c228"/></svg>
<div class="t fn" style="left:557px;top:404px">sitemap.json</div>
<!-- outline -->
<div class="a" style="left:501px;top:1025px;width:199px;height:17px;background:#383838"></div>
<svg style="left:510px;top:1032px" width="4" height="6"><path d="M0 0L4 3L0 6Z" fill="#b8c8d8"/></svg>
<div class="t" style="left:521px;top:1030px;font-size:11px;font-weight:bold;color:#cfcfcf">大纲</div>
<!-- EDITOR TAB -->
<svg style="left:711px;top:101px" width="16" height="13"><path d="M4.6 0.8Q2.6 0.8 2.6 2.8V4.8Q2.6 6.5 0.7 6.5Q2.6 6.5 2.6 8.2V10.2Q2.6 12.2 4.6 12.2M11.4 0.8Q13.4 0.8 13.4 2.8V4.8Q13.4 6.5 15.3 6.5Q13.4 6.5 13.4 8.2V10.2Q13.4 12.2 11.4 12.2" fill="none" stroke="#f5c228" stroke-width="1.4"/><rect x="5" y="10" width="1.3" height="1.3" fill="#f5c228"/><rect x="7.35" y="10" width="1.3" height="1.3" fill="#f5c228"/><rect x="9.7" y="10" width="1.3" height="1.3" fill="#f5c228"/></svg>
<div class="t" style="left:733px;top:100px;font-size:13px;color:#f2f2f2;letter-spacing:-0.1px">app.json</div>
<svg style="left:799px;top:102px" width="10" height="10"><path d="M0.7 0.7L9.3 9.3M9.3 0.7L0.7 9.3" stroke="#fff" stroke-width="1.4"/></svg>
<svg style="left:1310px;top:99px" width="17" height="16"><path d="M5.8 1.2H11.2L15.8 5.8V14.6H5.8V6.5" fill="none" stroke="#e0e0e0" stroke-width="1.2"/><path d="M11.2 1.2V5.8H15.8" fill="none" stroke="#e0e0e0" stroke-width="1"/><path d="M2.8 7.6A3 3 0 0 1 5 3H8M6.5 1.2L8.3 3L6.5 4.8" fill="none" stroke="#e0e0e0" stroke-width="1.1"/></svg>
<svg style="left:1343px;top:101px" width="14" height="13"><rect x="0.6" y="0.6" width="12.8" height="11.8" fill="none" stroke="#e0e0e0" stroke-width="1.2"/><path d="M7 0.6V12.4" stroke="#e0e0e0" stroke-width="1.2"/></svg>
<div class="a" style="left:1376px;top:106px;width:2px;height:2px;background:#c8c8c8;box-shadow:5px 0 0 #c8c8c8,10px 0 0 #c8c8c8"></div>
<!-- breadcrumb -->
<svg style="left:708px;top:127px" width="15" height="12"><path d="M3.5 0.6H14.5M3.5 4.2H14.5M3.5 7.8H14.5M3.5 11.4H14.5M0 0.6H1.5M0 4.2H1.5M0 7.8H1.5M0 11.4H1.5" stroke="#9a9a9a" stroke-width="1"/></svg>
<svg style="left:740px;top:126px" width="10" height="14"><path d="M0.6 0.6H9.4V13.2L5 9L0.6 13.2Z" fill="none" stroke="#9a9a9a" stroke-width="1.1"/></svg>
<svg style="left:769px;top:128px" width="13" height="11"><path d="M12.5 5.5H1M5.5 0.8L0.8 5.5L5.5 10.2" fill="none" stroke="#9a9a9a" stroke-width="1.1"/></svg>
<svg style="left:797px;top:128px" width="13" height="11"><path d="M0.5 5.5H12M7.5 0.8L12.2 5.5L7.5 10.2" fill="none" stroke="#555" stroke-width="1.1"/></svg>
<svg style="left:827px;top:127px" width="16" height="13"><path d="M4.6 0.8Q2.6 0.8 2.6 2.8V4.8Q2.6 6.5 0.7 6.5Q2.6 6.5 2.6 8.2V10.2Q2.6 12.2 4.6 12.2M11.4 0.8Q13.4 0.8 13.4 2.8V4.8Q13.4 6.5 15.3 6.5Q13.4 6.5 13.4 8.2V10.2Q13.4 12.2 11.4 12.2" fill="none" stroke="#f5c228" stroke-width="1.4"/><rect x="5" y="10" width="1.3" height="1.3" fill="#f5c228"/><rect x="7.35" y="10" width="1.3" height="1.3" fill="#f5c228"/><rect x="9.7" y="10" width="1.3" height="1.3" fill="#f5c228"/></svg>
<div class="t" style="left:849px;top:127px;font-size:13px;color:#a8a8a8;letter-spacing:-0.15px">app.json</div>
<svg style="left:903px;top:128px" width="6" height="10"><path d="M0.7 0.7L5.2 5L0.7 9.3" fill="none" stroke="#a8a8a8" stroke-width="1.1"/></svg>
<div class="t" style="left:913px;top:126px;font-size:13px;color:#a8a8a8">[&nbsp;&nbsp;]</div>
<div class="t" style="left:935px;top:127px;font-size:13px;color:#a8a8a8">pages</div>
<!-- folds -->
<svg style="left:735px;top:150px" width="10" height="6"><path d="M0.5 0.5L5 5L9.5 0.5" fill="none" stroke="#c0c0c0" stroke-width="1.1"/></svg>
<svg style="left:735px;top:182px" width="10" height="6"><path d="M0.5 0.5L5 5L9.5 0.5" fill="none" stroke="#c0c0c0" stroke-width="1.1"/></svg>
<!-- current line -->
<div class="a" style="left:753px;top:368px;width:656px;height:32px;background:#494949"></div>
<!-- indent guides -->
<div class="a" style="left:753px;top:176px;width:1px;height:564px;background:#404040"></div>
<div class="a" style="left:771px;top:208px;width:1px;height:516px;background:#404040"></div>
<!-- bracket match -->
<div class="a" style="left:850px;top:176px;width:9px;height:32px;border:1px solid #6a6a6a;background:#26331f"></div>
<div class="a" style="left:771px;top:720px;width:9px;height:20px;border:1px solid #6a6a6a;border-bottom:none;background:#26331f"></div>
<!-- scrollbar -->
<div class="a" style="left:1394px;top:144px;width:1px;height:596px;background:#4a4a4a"></div>
<div class="a" style="left:1395px;top:144px;width:14px;height:242px;background:#4d4d4d"></div>
<div class="a" style="left:1395px;top:234px;width:13px;height:2px;background:#8a8a8a"></div>
<div class="a" style="left:1395px;top:368px;width:14px;height:18px;background:#5e5e5e"></div>
<!-- code -->
<div class="ln" style="top:145px">1</div><div class="cl" style="top:145px"><span class="p">{</span></div>
<div class="ln" style="top:177px">2</div><div class="cl" style="top:177px">  <span class="p">"</span><span class="k">pages</span><span class="p">"</span><span class="p">:</span> <span class="p">[</span></div>
<div class="ln" style="top:209px">3</div><div class="cl" style="top:209px">    <span class="p">"</span><span class="s">pages/other/other</span><span class="p">",</span></div>
<div class="ln" style="top:241px">4</div><div class="cl" style="top:241px">    <span class="p">"</span><span class="s">pages/eyu/eyu</span><span class="p">",</span></div>
<div class="ln" style="top:273px">5</div><div class="cl" style="top:273px">    <span class="p">"</span><span class="s">pages/dage/dage</span><span class="p">",</span></div>
<div class="ln" style="top:305px">6</div><div class="cl" style="top:305px">    <span class="p">"</span><span class="s">pages/index/index</span><span class="p">",</span></div>
<div class="ln" style="top:337px">7</div><div class="cl" style="top:337px">    <span class="p">"</span><span class="s">pages/zhijian/zhijian</span><span class="p">",</span></div>
<div class="ln" style="top:369px;color:#e8e8e8">8</div><div class="cl" style="top:369px">    <span class="p">"</span><span class="s">pages/shezhi/shezhi</span><span class="p">",</span></div>
<div class="ln" style="top:401px">9</div><div class="cl" style="top:401px">    <span class="p">"</span><span class="s">pages/gameplay/gameplay</span><span class="p">",</span></div>
<div class="ln" style="top:433px">10</div><div class="cl" style="top:433px">    <span class="p">"</span><span class="s">pages/zhuanpan/zhuanpan</span><span class="p">",</span></div>
<div class="ln" style="top:465px">11</div><div class="cl" style="top:465px">    <span class="p">"</span><span class="s">pages/index3/index</span><span class="p">",</span></div>
<div class="ln" style="top:497px">12</div><div class="cl" style="top:497px">    <span class="p">"</span><span class="s">pages/web/web</span><span class="p">",</span></div>
<div class="ln" style="top:529px">13</div><div class="cl" style="top:529px">    <span class="p">"</span><span class="s">pages/dengguang/dengguang</span><span class="p">",</span></div>
<div class="ln" style="top:561px">14</div><div class="cl" style="top:561px">    <span class="p">"</span><span class="s">pages/danmu/danmu</span><span class="p">",</span></div>
<div class="ln" style="top:593px">15</div><div class="cl" style="top:593px">    <span class="p">"</span><span class="s">pages/select/select</span><span class="p">",</span></div>
<div class="ln" style="top:625px">16</div><div class="cl" style="top:625px">    <span class="p">"</span><span class="s">pages/attributes/attributes</span><span class="p">",</span></div>
<div class="ln" style="top:657px">17</div><div class="cl" style="top:657px">    <span class="p">"</span><span class="s">pages/game/game</span><span class="p">",</span></div>
<div class="ln" style="top:689px">18</div><div class="cl" style="top:689px">    <span class="p">"</span><span class="s">pages/summarize/summarize</span><span class="p">"</span></div>
<div class="a" style="left:701px;top:720px;width:708px;height:20px;overflow:hidden"><div class="ln" style="left:0;top:1px">19</div><div class="cl" style="left:53px;top:1px">  <span class="p">],</span></div></div>
<!-- BOTTOM PANEL -->
<div class="a" style="left:701px;top:740px;width:708px;height:1px;background:#454545"></div>
<div class="a" style="left:701px;top:741px;width:708px;height:29px;background:#2d2d2d"></div>
<div class="t" style="left:721px;top:750px;font-size:12px;color:#9a9a9a">构建</div>
<div class="t" style="left:763px;top:750px;font-size:12px;color:#f0f0f0">调试器</div>
<div class="a" style="left:763px;top:768px;width:33px;height:2px;background:#e8e8e8"></div>
<div class="a" style="left:804px;top:747px;width:33px;height:18px;border-radius:9px;background:#c9423b"></div>
<div class="t" style="left:807px;top:750px;font-size:12px;color:#fff;letter-spacing:-0.3px">14, 8</div>
<div class="t" style="left:857px;top:750px;font-size:12px;color:#9a9a9a">问题</div>
<div class="t" style="left:899px;top:750px;font-size:12px;color:#9a9a9a">输出</div>
<div class="t" style="left:983px;top:750px;font-size:11.5px;color:#9a9a9a">代码片段</div>
<svg style="left:1345px;top:754px" width="11" height="7"><path d="M0.6 6.3L5.5 1.2L10.4 6.3" fill="none" stroke="#d0d0d0" stroke-width="1.2"/></svg>
<svg style="left:1377px;top:753px" width="10" height="10"><path d="M0.7 0.7L9.3 9.3M9.3 0.7L0.7 9.3" stroke="#d0d0d0" stroke-width="1.3"/></svg>
<!-- devtools toolbar -->
<div class="a" style="left:701px;top:770px;width:708px;height:26px;background:#292a2d"></div>
<div class="a" style="left:701px;top:796px;width:708px;height:1px;background:#3c3c3c"></div>
<svg style="left:711px;top:777px" width="14" height="14"><path d="M5 12.5H0.6V0.6H12.4V5" fill="none" stroke="#9aa0a6" stroke-width="1.1"/><path d="M6 6L13.5 9L10.3 10.3L13.2 13.2L12.2 14L9.4 11.3L8.2 14Z" fill="#9aa0a6"/></svg>
<div class="a" style="left:735px;top:776px;width:1px;height:15px;background:#444"></div>
<div class="a" style="left:742px;top:770px;width:54px;height:26px;background:#000"></div>
<div class="t dt" style="left:753px;top:778px;font-size:12px;color:#fff">Wxml</div>
<div class="t dt" style="left:808px;top:778px;font-size:12px">Console</div>
<div class="t dt" style="left:873px;top:778px;font-size:12px">Sources</div>
<div class="t dt" style="left:939px;top:778px;font-size:12px">Network</div>
<div class="t dt" style="left:1008px;top:778px;font-size:12px">Performance</div>
<div class="t dt" style="left:1098px;top:778px;font-size:12px">Memory</div>
<svg style="left:1162px;top:779px" width="10" height="9"><path d="M0.7 0.7L4.2 4.5L0.7 8.3M5.2 0.7L8.7 4.5L5.2 8.3" fill="none" stroke="#c8c8c8" stroke-width="1.1"/></svg>
<svg style="left:1254px;top:778px" width="10" height="10"><circle cx="5" cy="5" r="5" fill="#e8453c"/><path d="M3.2 3.2L6.8 6.8M6.8 3.2L3.2 6.8" stroke="#fff" stroke-width="1.1"/></svg>
<div class="t dt" style="left:1268px;top:778px;font-size:12px">14</div>
<svg style="left:1286px;top:778px" width="11" height="10"><path d="M5.5 0L11 10H0Z" fill="#f5b400"/><path d="M5.5 3.5V6.8M5.5 7.8V8.8" stroke="#222" stroke-width="1.1"/></svg>
<div class="t dt" style="left:1300px;top:778px;font-size:12px">8</div>
<div class="a" style="left:1317px;top:775px;width:1px;height:16px;background:#444"></div>
<svg style="left:1329px;top:776px" width="15" height="15"><path d="M7.5 0.8L9 0.8L9.4 2.7L10.9 3.3L12.5 2.2L13.6 3.3L12.5 4.9L13.1 6.4L15 6.8V8.3L13.1 8.7L12.5 10.2L13.6 11.8L12.5 12.9L10.9 11.8L9.4 12.4L9 14.3H6.6L6.2 12.4L4.7 11.8L3.1 12.9L2 11.8L3.1 10.2L2.5 8.7L0.6 8.3V6.8L2.5 6.4L3.1 4.9L2 3.3L3.1 2.2L4.7 3.3L6.2 2.7L6.6 0.8Z" fill="#8a8a8a"/><circle cx="7.8" cy="7.5" r="2.4" fill="#292a2d"/></svg>
<div class="a" style="left:1363px;top:777px;width:3px;height:3px;border-radius:50%;background:#9a9a9a;box-shadow:0 5px 0 #9a9a9a,0 10px 0 #9a9a9a"></div>
<svg style="left:1384px;top:776px" width="17" height="15"><rect x="4" y="0.8" width="12.2" height="9" fill="none" stroke="#7a7a7a" stroke-width="1.6"/><path d="M0.8 4.5V14.2H12.5" fill="none" stroke="#7a7a7a" stroke-width="1.6"/></svg>
<!-- row 3 -->
<div class="a" style="left:701px;top:797px;width:382px;height:26px;background:#292a2d"></div>
<div class="a" style="left:1084px;top:797px;width:325px;height:26px;background:#292a2d"></div>
<div class="a" style="left:701px;top:823px;width:708px;height:1px;background:#3c3c3c"></div>
<div class="a" style="left:709px;top:804px;width:12px;height:12px;border:1px solid #888;border-radius:2px"></div>
<div class="t dt" style="left:727px;top:805px;font-size:12px">Composed</div>
<div class="a" style="left:1083px;top:797px;width:1px;height:245px;background:#444"></div>
<div class="a" style="left:1084px;top:797px;width:50px;height:26px;background:#000"></div>
<div class="t dt" style="left:1093px;top:805px;font-size:12px;color:#fff">Styles</div>
<div class="t dt" style="left:1143px;top:805px;font-size:12px">Computed</div>
<div class="t dt" style="left:1219px;top:805px;font-size:12px">Dataset</div>
<div class="t dt" style="left:1279px;top:805px;font-size:12px">Component Data</div>
<!-- styles filter -->
<div class="a" style="left:1084px;top:824px;width:325px;height:27px;background:#262626"></div>
<div class="a" style="left:1087px;top:827px;width:250px;height:20px;background:#202020"></div>
<div class="t" style="left:1091px;top:831px;font-size:12px;color:#8a8a8a">Filter</div>
<div class="t" style="left:1347px;top:832px;font-size:11.5px;font-weight:bold;color:#e0e0e0;font-family:'Liberation Mono',monospace">.cls</div>
<svg style="left:1386px;top:831px" width="11" height="11"><path d="M5.5 0V11M0 5.5H11" stroke="#7a7a7a" stroke-width="1.2"/></svg>
<svg style="left:1398px;top:842px" width="5" height="5"><path d="M5 0V5H0Z" fill="#666"/></svg>
<div class="a" style="left:1407px;top:797px;width:1px;height:245px;background:#3a3a3a"></div>
<!-- xml tree -->
<div class="t" style="left:715px;top:831px;font-size:11px;color:#5db0d7;font-family:'Liberation Mono',monospace">&lt;pages/other/other&gt;</div>
<svg style="left:718px;top:849px" width="5" height="9"><path d="M0 0L5 4.5L0 9Z" fill="#8a8a8a"/></svg>
<div class="t" style="left:726px;top:848px;font-size:11px;color:#f0f0f0;font-family:'Liberation Mono',monospace">#shadow-root</div>
<div class="t" style="left:715px;top:865px;font-size:11px;color:#5db0d7;font-family:'Liberation Mono',monospace">&lt;/pages/other/other&gt;</div>
<div class="a" style="left:701px;top:1019px;width:382px;height:1px;background:#4a4a4a"></div>
<!-- STATUS BAR -->
<svg style="left:517px;top:1050px" width="12" height="12"><circle cx="6" cy="6" r="5.4" fill="none" stroke="#a8a8a8" stroke-width="1"/><path d="M3.8 3.8L8.2 8.2M8.2 3.8L3.8 8.2" stroke="#a8a8a8" stroke-width="1"/></svg>
<div class="t" style="left:533px;top:1050px;font-size:12px;color:#a8a8a8">0</div>
<svg style="left:544px;top:1050px" width="13" height="12"><path d="M6.5 0.8L12.3 11.3H0.7Z" fill="none" stroke="#a8a8a8" stroke-width="1"/><path d="M6.5 4.3V8M6.5 9V10" stroke="#a8a8a8" stroke-width="1"/></svg>
<div class="t" style="left:560px;top:1050px;font-size:12px;color:#a8a8a8">0</div>
<div class="t" style="left:1165px;top:1050px;font-size:12px;color:#a8a8a8">行 8，列 28</div>
<div class="t" style="left:1243px;top:1050px;font-size:12px;color:#a8a8a8">空格: 2</div>
<div class="t" style="left:1296px;top:1050px;font-size:12px;color:#a8a8a8">UTF-8</div>
<div class="t" style="left:1343px;top:1050px;font-size:12px;color:#a8a8a8">LF</div>
<div class="t" style="left:1370px;top:1050px;font-size:12px;color:#a8a8a8">JSON</div>
<!-- WATERMARK -->
<svg style="left:920px;top:720px" width="210" height="95" viewBox="920 720 210 95">
 <circle cx="965" cy="756" r="27.5" fill="#0a2cff"/>
 <g fill="#0a2cff">
  <rect x="940" y="727" width="5" height="5"/><rect x="932" y="733" width="3" height="3"/><rect x="928" y="740" width="2" height="2"/><rect x="935" y="745" width="3" height="3"/>
  <rect x="1030" y="733" width="4" height="4"/><rect x="1085" y="733" width="3" height="3"/><rect x="1112" y="740" width="3" height="3"/>
 </g>
 <text x="947" y="774" font-family="Liberation Sans" font-size="39" font-weight="bold" fill="#fff" stroke="#fff" stroke-width="0.8" transform="translate(947,774) skewX(-10) scale(1,1.05) translate(-947,-774)">顶</text>
 <text x="997" y="776" font-family="Liberation Sans" font-size="42" font-weight="bold" fill="#0a2cff" stroke="#0a2cff" stroke-width="1.6" letter-spacing="-3.5" transform="translate(997,776) skewX(-10) scale(1,1.05) translate(-997,-776)">尖源码</text>
 <text x="939" y="802" font-family="Liberation Sans" font-size="20" fill="#0a2cff" stroke="#0a2cff" stroke-width="0.5" letter-spacing="0">www.djyuanma.com</text>
</svg>
</body></html>
